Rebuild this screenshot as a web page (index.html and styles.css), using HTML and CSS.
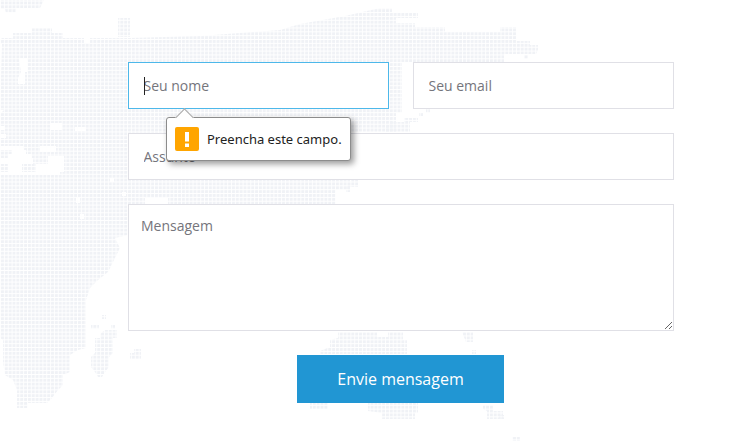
FILE: index.html
```html
<!DOCTYPE html>
<html lang="pt">
<head>
<meta charset="utf-8">
<title>Contato</title>
<link rel="stylesheet" href="styles.css">
</head>
<body>
<main class="page">
  <svg class="map" width="743" height="441" viewBox="0 0 743 441" aria-hidden="true">
    <defs>
      <pattern id="dots" width="3.85" height="3.85" patternUnits="userSpaceOnUse" x="1" y="1.5">
        <rect width="3" height="3" rx="0.5" class="dot"></rect>
      </pattern>
    </defs>
    <g class="land">
      <polygon points="0,0 44,0 40,8 16,8 16,13 6,13 5,9 0,9"></polygon>
      <polygon points="118,18 130,18 130,37 118,37"></polygon>
      <polygon points="2,38 13,38 13,33 32,33 32,28 52,28 52,33 63,33 63,38 130,38 200,36 280,30 300,24 345,16 380,8 392,8 392,13 418,13 418,18 396,18 396,23 415,23 415,27 445,27 445,32 500,32 500,27 516,27 516,36 516,41 530,41 530,45 538,45 538,50 536,54 504,54 504,62 402,62 402,113 396,113 396,132 350,132 350,190 336,190 336,204 300,204 168,205 143,205 128,206 128,235 115,238 120,248 113,262 108,272 98,280 90,288 86,300 86,348 78,350 70,355 70,372 63,375 63,385 58,390 52,398 47,403 28,403 28,408 17,408 17,390 13,380 5,375 3,362 3,340 0,338 0,110 2,44 0,44 0,40"></polygon>
      <polygon points="95,338 113,338 113,353 109,357 109,367 105,372 102,377 98,377 95,372 91,367 91,357 95,353"></polygon>
      <rect x="91" y="325" width="8" height="4"></rect>
      <rect x="111" y="325" width="4" height="4"></rect>
      <rect x="102" y="315" width="4" height="4"></rect>
      <polygon points="105,330 117,330 117,338 100,338 100,334"></polygon>
      <polygon points="130,357 130,353 134,353 134,349 141,349 141,359 130,359"></polygon>
      <rect x="426" y="109" width="4" height="4"></rect>
      <polygon points="404,118 418,118 418,122 410,122 410,132 385,132 385,128 392,122 404,122"></polygon>
      <rect x="419" y="113" width="4" height="4"></rect>
      <polygon points="352,178 358,178 358,187 350,187 350,192 346,192 346,187 350,183"></polygon>
      <rect x="524" y="55" width="4" height="4"></rect>
      <polygon points="338,332 377,332 377,337 388,337 388,332 403,332 403,340 407,340 407,354 320,354 320,351 330,347 330,340 338,338"></polygon>
      <polygon points="462,332 473,332 473,342 466,342"></polygon>
      <rect x="472" y="350" width="4" height="4"></rect>
      <rect x="310" y="403" width="18" height="6"></rect>
      <polygon points="368,403 418,403 418,413 415,413 415,419 382,419 382,413 368,411"></polygon>
      <polygon points="483,405 493,405 493,411 503,411 503,419 487,419 487,411 483,409"></polygon>
      <rect x="499" y="415" width="5" height="4"></rect>
      <rect x="512" y="437" width="8" height="4"></rect>
    </g>
    <g class="holes">
      <polygon points="19,58 27,58 27,72 25,72 25,84 18,84 18,78 21,72"></polygon>
      <polygon points="0,110 4,110 0,114"></polygon>
      <rect x="84" y="38" width="6" height="5"></rect>
      <rect x="0" y="126" width="5" height="4"></rect>
      <rect x="50" y="123" width="12" height="7"></rect>
      <rect x="75" y="127" width="11" height="4"></rect>
      <rect x="0" y="134" width="6" height="4"></rect>
      <rect x="0" y="146" width="24" height="4"></rect>
      <rect x="40" y="146" width="16" height="6"></rect>
      <rect x="12" y="150" width="14" height="6"></rect>
      <rect x="8" y="154" width="24" height="4"></rect>
      <rect x="0" y="158" width="33" height="6"></rect>
      <rect x="48" y="156" width="16" height="16"></rect>
      <rect x="8" y="164" width="14" height="8"></rect>
      <rect x="36" y="164" width="24" height="8"></rect>
      <rect x="0" y="172" width="60" height="3"></rect>
      <rect x="110" y="178" width="4" height="4"></rect>
      <rect x="76" y="197" width="4" height="6"></rect>
      <rect x="122" y="192" width="4" height="4"></rect>
      <rect x="145" y="198" width="23" height="8"></rect>
      <rect x="80" y="214" width="4" height="5"></rect>
    </g>
  </svg>

  <form class="form">
    <div class="field">
      <input class="input input--focus" type="text" placeholder="Seu nome">
      <span class="caret"></span>
      <div class="tip">
        <span class="tip__arrow"></span>
        <svg class="tip__icon" width="24" height="24" viewBox="0 0 24 24" aria-hidden="true">
          <rect width="24" height="24" rx="2" class="tip__bg"></rect>
          <rect x="10" y="5" width="4" height="9.5" class="tip__mark"></rect>
          <rect x="10" y="16.5" width="4" height="3.5" class="tip__mark"></rect>
        </svg>
        <span class="tip__text">Preencha este campo.</span>
      </div>
    </div>
    <div class="field">
      <input class="input" type="email" placeholder="Seu email">
    </div>
    <div class="field field--wide">
      <input class="input" type="text" placeholder="Assunto">
    </div>
    <div class="field field--wide">
      <textarea class="textarea" placeholder="Mensagem"></textarea>
    </div>
    <div class="field field--wide actions">
      <button class="button" type="button">Envie mensagem</button>
    </div>
  </form>
</main>
</body>
</html>
```

FILE: styles.css
```css
* {
  box-sizing: border-box;
}

html,
body {
  margin: 0;
  background: #fff;
}

.page {
  position: relative;
  width: 743px;
  height: 441px;
  overflow: hidden;
  padding: 62px 69px 0 128px;
  font-family: "Open Sans", "Noto Sans", sans-serif;
}

.map {
  position: absolute;
  top: 0;
  left: 0;
}

.dot {
  fill: #f0f2f6;
}

.land polygon,
.land rect {
  fill: url(#dots);
}

.holes polygon,
.holes rect {
  fill: #fff;
}

.form {
  position: relative;
  display: grid;
  grid-template-columns: 261px 261px;
  column-gap: 24px;
  row-gap: 24px;
}

.field {
  position: relative;
  display: flex;
}

.field--wide {
  grid-column: 1 / -1;
}

.input,
.textarea {
  display: block;
  width: 100%;
  margin: 0;
  border: 1px solid #e0e0e6;
  border-radius: 0;
  background: #fff;
  color: #333;
  font-family: inherit;
  font-size: 14px;
  outline: none;
}

.input {
  height: 47px;
  padding: 0 14.5px;
}

.textarea {
  height: 127px;
  padding: 11px 12px;
  line-height: 20px;
  resize: vertical;
}

.input::placeholder,
.textarea::placeholder {
  color: #75757c;
  opacity: 1;
}

.input--focus {
  border-color: #4db8ea;
}

.caret {
  position: absolute;
  top: 15px;
  left: 16px;
  width: 1px;
  height: 18px;
  background: #222;
}

.actions {
  padding-left: 169px;
}

.button {
  width: 207px;
  height: 48px;
  padding: 0;
  border: 0;
  background: #2196d3;
  color: #fff;
  font-family: inherit;
  font-size: 16px;
  cursor: pointer;
}

.tip {
  position: absolute;
  top: 55px;
  left: 38px;
  z-index: 2;
  display: flex;
  align-items: center;
  gap: 8px;
  width: 185px;
  height: 44px;
  padding: 0 8px;
  border: 1px solid #8c8c8c;
  border-radius: 3px;
  background: #fff;
  box-shadow: 3px 3px 6px rgba(0, 0, 0, 0.4);
}

.tip__arrow {
  position: absolute;
  top: -7px;
  left: 11px;
  width: 13px;
  height: 13px;
  border-top: 1px solid #a8a8a8;
  border-left: 1px solid #a8a8a8;
  background: #fff;
  transform: rotate(45deg);
}

.tip__icon {
  flex: none;
}

.tip__bg {
  fill: #ffa500;
}

.tip__mark {
  fill: #fff;
}

.tip__text {
  color: #222;
  font-family: "Noto Sans", "Open Sans", sans-serif;
  font-size: 13px;
  white-space: nowrap;
}
```
